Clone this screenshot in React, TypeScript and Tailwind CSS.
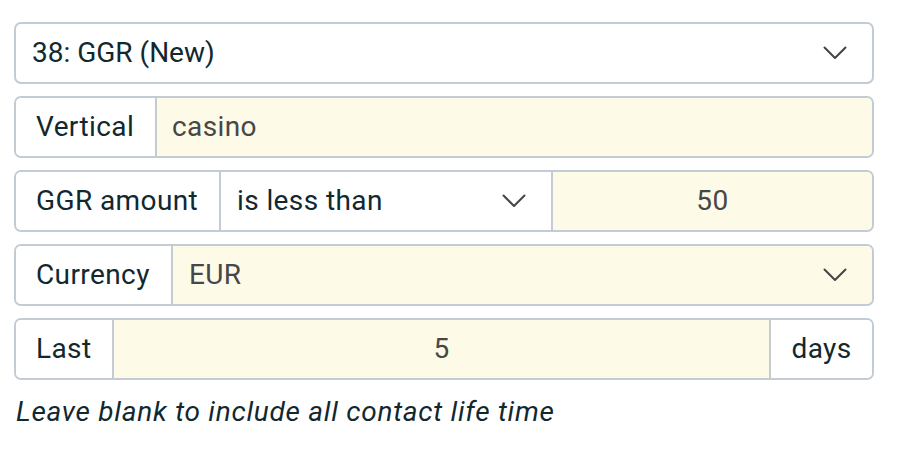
import React from "react";

const Chevron = () => (
  <svg width="24" height="14" viewBox="0 0 24 14" fill="none" className="shrink-0">
    <path d="M1.5 1.5 L12 12 L22.5 1.5" stroke="#444" strokeWidth="2" strokeLinecap="round" strokeLinejoin="round" />
  </svg>
);

const row = "flex h-[62px] border-2 border-[#c3ccd4] rounded-[7px] overflow-hidden";
const label = "flex items-center pl-[20px] border-r-2 border-[#c3ccd4] bg-white shrink-0";
const field = "flex items-center bg-[#fdfae8] text-[#474747]";

export default function App() {
  return (
    <div className="w-[900px] h-[458px] bg-white pt-[22px] pl-[14px] text-[28px] text-[#12282f] tracking-[0.4px]" style={{ fontFamily: "Roboto, 'Liberation Sans', sans-serif" }}>
      <div className="w-[860px] flex flex-col gap-[12px]">
        <div className={`${row} items-center justify-between pl-[16px] pr-[25px]`}>
          <span className="tracking-normal">38: GGR (New)</span>
          <Chevron />
        </div>

        <div className={row}>
          <div className={`${label} w-[141px]`}>Vertical</div>
          <div className={`${field} flex-1 pl-[15px]`}>casino</div>
        </div>

        <div className={row}>
          <div className={`${label} w-[205px]`}>GGR amount</div>
          <div className="flex items-center justify-between w-[332px] pl-[16px] pr-[25px] border-r-2 border-[#c3ccd4] bg-white shrink-0">
            <span>is less than</span>
            <Chevron />
          </div>
          <div className={`${field} flex-1 justify-center`}>50</div>
        </div>

        <div className={row}>
          <div className={`${label} w-[157px]`}>Currency</div>
          <div className={`${field} flex-1 justify-between pl-[16px] pr-[25px]`}>
            <span>EUR</span>
            <Chevron />
          </div>
        </div>

        <div className={row}>
          <div className={`${label} w-[98px]`}>Last</div>
          <div className={`${field} flex-1 justify-center`}>5</div>
          <div className="flex items-center justify-center w-[103px] border-l-2 border-[#c3ccd4] bg-white shrink-0">days</div>
        </div>
      </div>
      <p className="mt-[15px] ml-[2px] italic leading-[33px] tracking-[0.75px]">Leave blank to include all contact life time</p>
    </div>
  );
}
